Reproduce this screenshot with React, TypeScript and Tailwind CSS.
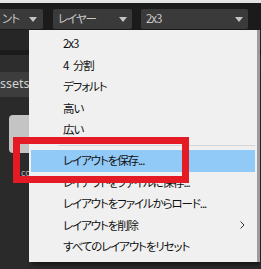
import type { ReactNode } from 'react'

const font = "font-['Noto_Sans_CJK_JP','Noto_Sans',sans-serif] [font-feature-settings:'palt'] text-[11.5px] tracking-[-1.1px] leading-none"

function Caret() {
  return (
    <svg width="8" height="5" viewBox="0 0 8 5" className="shrink-0">
      <polygon points="0,0 8,0 4,5" fill="#c4c4c4" />
    </svg>
  )
}

function Dropdown({ label, width, children }: { label: string; width: string; children?: ReactNode }) {
  return (
    <div className={`${width} h-[20px] bg-[#3a3a3a] rounded-[2px] flex items-center justify-between pl-[5px] pr-[5px]`}>
      <span className={`${font} text-[#c8c8c8]`}>{label}</span>
      {children}
      <Caret />
    </div>
  )
}

function MenuItem({ label, active, sub }: { label: string; active?: boolean; sub?: boolean }) {
  return (
    <div
      className={`h-[21.5px] mx-[2px] flex items-center justify-between pl-[32px] pr-[10px] ${
        active ? 'bg-[#91c9f7]' : ''
      }`}
    >
      <span className={`${font} text-[#111]`}>{label}</span>
      {sub && (
        <svg width="5" height="8" viewBox="0 0 5 8">
          <polyline points="0.5,0.5 4,4 0.5,7.5" fill="none" stroke="#333" strokeWidth="1" />
        </svg>
      )}
    </div>
  )
}

export default function App() {
  return (
    <div className="relative w-[261px] h-[269px] overflow-hidden bg-[#2a2a2a]">
      {/* window top edge */}
      <div className="h-[3px] bg-[#e4e4e4]" />

      {/* toolbar */}
      <div className="h-[27px] bg-[#1b1b1b] flex items-start pt-[6px]">
        <div className="w-[43px] h-[20px] bg-[#3a3a3a] rounded-r-[2px] flex items-center justify-between pl-[2px] pr-[6px]">
          <span className={`${font} text-[#c8c8c8]`}>ント</span>
          <Caret />
        </div>
        <div className="ml-[10px]">
          <Dropdown label="レイヤー" width="w-[79px]" />
        </div>
        <div className="ml-[9px]">
          <Dropdown label="2x3" width="w-[107px]" />
        </div>
      </div>

      {/* panels behind the menu */}
      <div className="flex flex-col">
        <div className="h-[20px] bg-[#262626]" />
        <div className="h-[5px] bg-[#1b1b1b]" />
        <div className="h-[17px] bg-[#2d2d2d]" />
        <div className="h-[25px] bg-[#2a2a2a] flex">
          <div className="w-[60px] bg-[#3d3d3d] flex items-center overflow-hidden">
            <span className="font-['Noto_Sans',sans-serif] text-[12.5px] text-[#d2d2d2] leading-none">ssets</span>
          </div>
        </div>
        <div className="pt-[18px] pl-[9px]">
          <div className="w-[60px] h-[38px] rounded-[4px] bg-[#c4c4c4]" />
          <div className="mt-[15px] pl-[12px] font-['Noto_Sans',sans-serif] text-[9px] text-[#b4b4b4] leading-none">co</div>
        </div>
      </div>

      {/* layout menu */}
      <div className="absolute left-[29px] top-[30px] w-[228px] bg-[#f0f0f0] pt-[3px] pb-[4px] shadow-[3px_3px_3px_rgba(0,0,0,0.45)]">
        <MenuItem label="2x3" />
        <MenuItem label={'4\u2002分割'} />
        <MenuItem label="デフォルト" />
        <MenuItem label="高い" />
        <MenuItem label="広い" />
        <div className="h-[9.5px] flex items-center">
          <div className="ml-[30px] mr-[2px] h-px flex-1 bg-[#d4d4d4]" />
        </div>
        <MenuItem label="レイアウトを保存..." active />
        <MenuItem label="レイアウトをファイルに保存..." />
        <MenuItem label="レイアウトをファイルからロード..." />
        <MenuItem label="レイアウトを削除" sub />
        <MenuItem label="すべてのレイアウトをリセット" />
      </div>
      <div className="absolute left-[257px] top-[30px] w-[3px] h-[232px] bg-[#9c9c9c]" />

      {/* annotation */}
      <div className="absolute left-[13px] top-[137px] w-[176px] h-[46px] border-[7px] border-[#e41b24]" />
    </div>
  )
}
